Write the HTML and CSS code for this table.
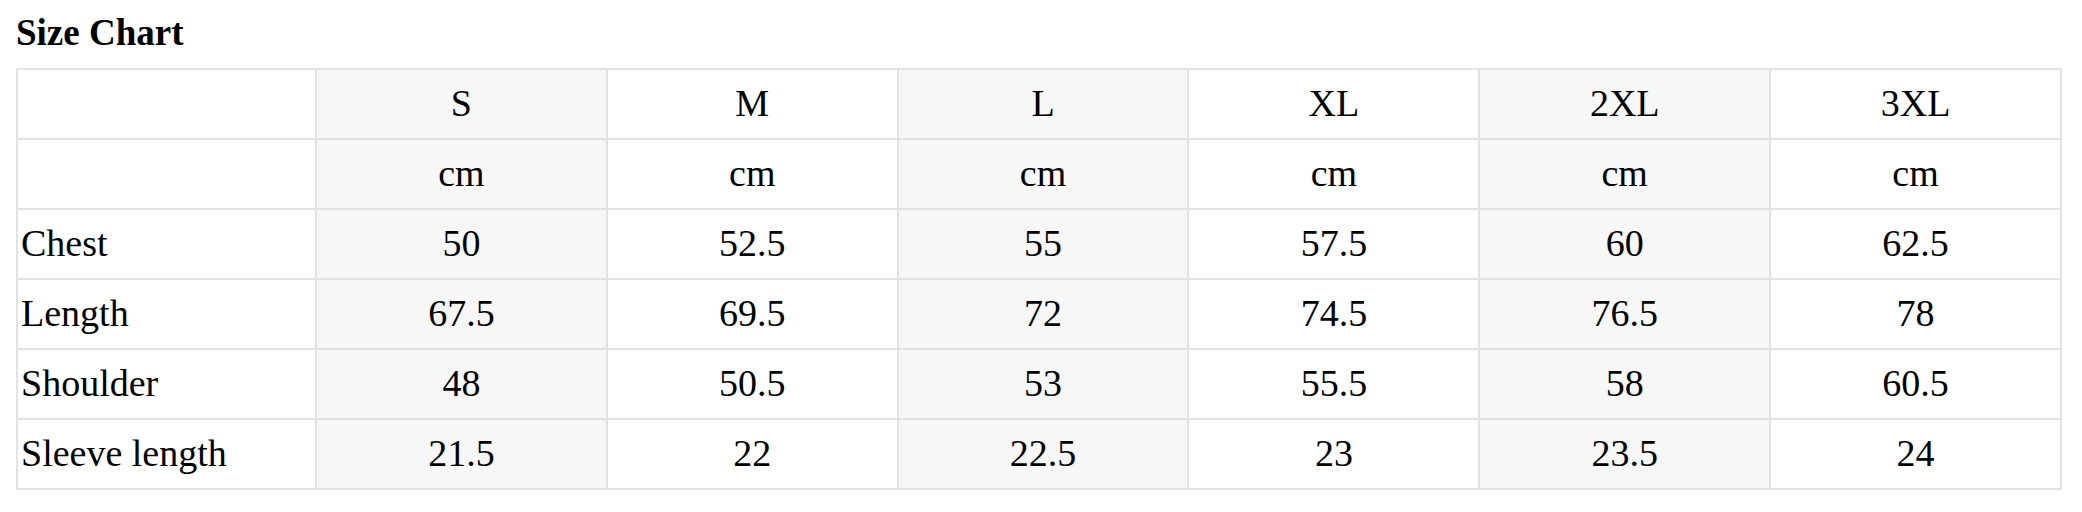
FILE: index.html
```html
<!DOCTYPE html>
<html lang="en">
<head>
<meta charset="utf-8">
<title>Size Chart</title>
<link rel="stylesheet" href="styles.css">
</head>
<body>
<div class="size-chart">
  <h2 class="size-chart__title">Size Chart</h2>
  <table class="size-table">
    <colgroup>
      <col class="col-label">
      <col class="col-alt"><col><col class="col-alt"><col><col class="col-alt"><col>
    </colgroup>
    <thead>
      <tr><th></th><th>S</th><th>M</th><th>L</th><th>XL</th><th>2XL</th><th>3XL</th></tr>
      <tr><th></th><th>cm</th><th>cm</th><th>cm</th><th>cm</th><th>cm</th><th>cm</th></tr>
    </thead>
    <tbody>
      <tr><td>Chest</td><td>50</td><td>52.5</td><td>55</td><td>57.5</td><td>60</td><td>62.5</td></tr>
      <tr><td>Length</td><td>67.5</td><td>69.5</td><td>72</td><td>74.5</td><td>76.5</td><td>78</td></tr>
      <tr><td>Shoulder</td><td>48</td><td>50.5</td><td>53</td><td>55.5</td><td>58</td><td>60.5</td></tr>
      <tr><td>Sleeve length</td><td>21.5</td><td>22</td><td>22.5</td><td>23</td><td>23.5</td><td>24</td></tr>
    </tbody>
  </table>
</div>
</body>
</html>
```

FILE: styles.css
```css
html, body {
  margin: 0;
  padding: 0;
  background: #ffffff;
}

body {
  font-family: "Liberation Serif", "Times New Roman", serif;
  color: #000000;
}

.size-chart {
  padding: 0 20px 0 16px;
}

.size-chart__title {
  font-size: 37px;
  line-height: 42px;
  font-weight: bold;
  margin: 12px 0 14px;
}

.size-table {
  width: 100%;
  table-layout: fixed;
  border-collapse: collapse;
  font-size: 38px;
  line-height: 44px;
}

.col-label {
  width: 299px;
}

.col-alt {
  background: #f7f7f7;
}

.size-table th,
.size-table td {
  border: 2px solid #e2e2e2;
  padding: 11px 4px 13px;
  font-weight: normal;
  text-align: center;
  white-space: nowrap;
}

.size-table th:first-child,
.size-table td:first-child {
  text-align: left;
  padding-left: 3px;
}
```
